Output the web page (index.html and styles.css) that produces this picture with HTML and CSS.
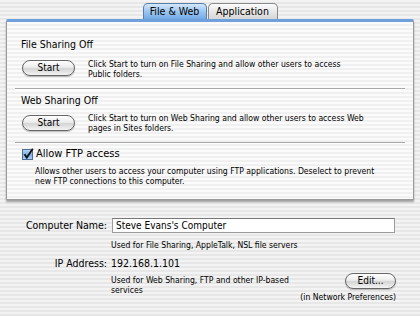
FILE: index.html
```html
<html>
<head>
  <meta http-equiv="Content-Type" content="text/html; charset=UTF-8"/>
  <title>Sharing</title>
  <link rel="stylesheet" href="styles.css">
</head>
<body>
<div class="tabs">
  <div class="tab sel">File &amp; Web</div>
  <div class="tab app">Application</div>
</div>

<div class="panel">
  <div class="sect first">
    <div class="title">File Sharing Off</div>
    <div class="row">
      <div class="btn start">Start</div>
      <div class="desc">Click Start to turn on File Sharing and allow other users to access<br>Public folders.</div>
    </div>
  </div>
  <div class="sep"></div>
  <div class="sect">
    <div class="title">Web Sharing Off</div>
    <div class="row">
      <div class="btn start">Start</div>
      <div class="desc">Click Start to turn on Web Sharing and allow other users to access Web<br>pages in Sites folders.</div>
    </div>
  </div>
  <div class="sep"></div>
  <div class="sect ftp">
    <div class="check">
      <svg width="12" height="12" viewBox="0 0 12 12">
        <defs>
          <linearGradient id="cb" x1="0" y1="0" x2="0" y2="1">
            <stop offset="0" stop-color="#bcd8f4"/>
            <stop offset="0.5" stop-color="#7aaee6"/>
            <stop offset="1" stop-color="#a9d0f6"/>
          </linearGradient>
        </defs>
        <rect x="0.5" y="1.5" width="10" height="10" fill="url(#cb)" stroke="#4f6f96"/>
        <path d="M2.5 6.2 L4.8 9.6 L10.8 0.8" fill="none" stroke="#111" stroke-width="1.8"/>
      </svg>
      <span class="big">Allow FTP access</span>
    </div>
    <div class="desc">Allows other users to access your computer using FTP applications. Deselect to prevent<br>new FTP connections to this computer.</div>
  </div>
</div>

<div class="info">
  <div class="lbl">Computer Name:</div>
  <div class="field">Steve Evans's Computer</div>
  <div></div>
  <div class="note">Used for File Sharing, AppleTalk, NSL file servers</div>
  <div class="lbl ip">IP Address:</div>
  <div class="val">192.168.1.101</div>
  <div></div>
  <div class="last">
    <div class="note">Used for Web Sharing, FTP and other IP-based<br>services</div>
    <div class="edit">
      <div class="btn">Edit...</div>
      <div class="note">(in Network Preferences)</div>
    </div>
  </div>
</div>
</body>
</html>
```

FILE: styles.css
```css
body {margin: 0; width: 420px; height: 316px; overflow: hidden; font-family: "DejaVu Sans Condensed", "DejaVu Sans", sans-serif; font-stretch: condensed; color: #000;
  background: repeating-linear-gradient(#f3f3f3 0px, #f3f3f3 2px, #e7e7e7 2px, #e7e7e7 4px)}

.tabs {display: flex; justify-content: center; padding-top: 3px; height: 16px; position: relative; z-index: 2}
.tab {height: 15px; line-height: 15px; text-align: center; font-size: 10.5px; border: 1px solid #8a8a8a; border-bottom: none; border-radius: 5px 5px 0 0;
  background: linear-gradient(#fdfdfd, #e6e6e6 55%, #d6d6d6); margin-left: 1px}
.tab.sel {width: 62px; background: linear-gradient(#d4e8fb, #9cc6f0 50%, #74aae6); border-color: #5b7ea6; margin-left: 0}
.tab.app {width: 68px}

.panel {margin: 0 6px; height: 177px; border: 1px solid #9a9a9a; border-top: 3px solid #6fa0dc; border-radius: 2px 2px 0 0;
  background: repeating-linear-gradient(#fbfbfb 0px, #fbfbfb 2px, #f0f0f0 2px, #f0f0f0 4px);
  box-shadow: 0 2px 2px rgba(0,0,0,0.35); padding: 0 8px}

.sect {padding: 4px 0 0 6px}
.sect.first {padding-top: 16px}
.title {font-size: 10.5px; height: 13px; line-height: 13px}
.row {display: flex; align-items: flex-start; margin-top: 6px}
.first .row {margin-top: 7px}
.btn {width: 51px; height: 14px; line-height: 14px; text-align: center; font-size: 10px; border: 1px solid #666; border-radius: 8px;
  background: linear-gradient(#ffffff, #ececec 45%, #d4d4d4 55%, #f4f4f4); box-shadow: 0 1px 1px rgba(0,0,0,0.25)}
.start {margin: 2px 0 0 1px}
.desc {font-size: 8.6px; line-height: 10px; margin-left: 13px}
.first .desc {margin-top: 1px}
.sep {height: 1px; background: #a8a8a8; border-bottom: 1px solid #fff; margin-top: 9px}

.ftp {padding-top: 2px}
.check {display: flex; align-items: center; height: 15px; margin-left: 1px}
.check svg {margin-right: 2px}
.big {font-size: 11px}
.ftp .desc {margin: 5px 0 0 14px}

.info {display: grid; grid-template-columns: 107px 285px; column-gap: 4px; margin-top: 18px}
.lbl {text-align: right; font-size: 10.5px; line-height: 15px}
.field {height: 13px; line-height: 13px; margin: 0 1px; border: 1px solid #9b9b9b; border-top-color: #777; background: #fff; font-size: 10px; padding-left: 3px}
.note {font-size: 8.6px; line-height: 10px}
.info > .note {margin-top: 7px}
.ip {margin-top: 5px; line-height: 16px}
.val {margin-top: 5px; font-size: 10.5px; line-height: 16px}
.last {display: flex; justify-content: space-between; margin-top: 2px}
.last > .note {margin-top: 2px}
.edit {display: flex; flex-direction: column; align-items: flex-end}
.edit .btn {width: 49px}
.edit .note {margin-top: 3px}
```
